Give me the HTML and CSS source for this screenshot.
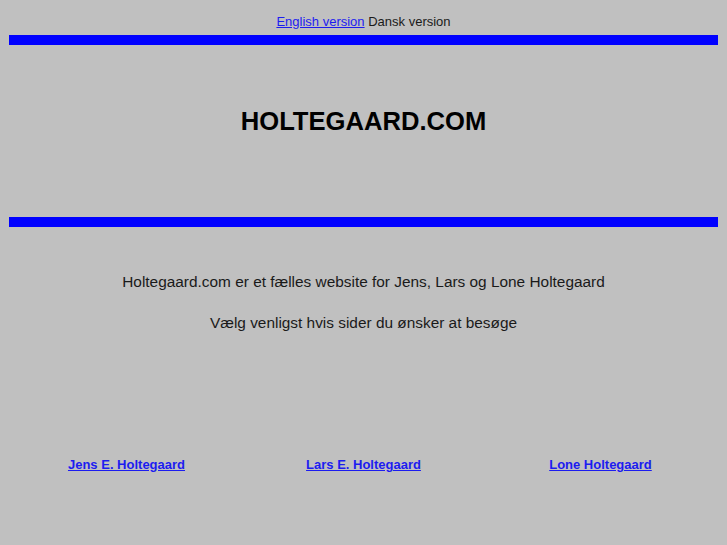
FILE: index.html
```html
<!DOCTYPE html>
<html lang="da">
<head>
  <meta charset="UTF-8" />
  <title>Holtegaard.com</title>
  <link rel="stylesheet" href="styles.css">
</head>
<body>

<div id="langBar">
  <a href="#">English version</a> Dansk version
</div>

<div class="blueBar"></div>

<div id="banner">
  <h1>HOLTEGAARD.COM</h1>
</div>

<div class="blueBar"></div>

<div id="intro">
  <p>Holtegaard.com er et fælles website for Jens, Lars og Lone Holtegaard</p>
  <p>Vælg venligst hvis sider du ønsker at besøge</p>
</div>

<div id="people">
  <a href="#">Jens E. Holtegaard</a>
  <a href="#">Lars E. Holtegaard</a>
  <a href="#">Lone Holtegaard</a>
</div>

</body>
</html>
```

FILE: styles.css
```css
body {
  margin: 8px;
  background: #c0c0c0;
  color: #1a1a1a;
  font-family: "Liberation Sans", Arial, sans-serif;
}

a {
  color: #1c1cf0;
}

#langBar {
  text-align: center;
  font-size: 13px;
  padding-top: 6px;
  height: 21px;
}

.blueBar {
  height: 10px;
  margin: 0 1px;
  background: #0000ff;
}

#banner {
  height: 172px;
  box-sizing: border-box;
  padding-top: 62px;
  text-align: center;
}

h1 {
  margin: 0;
  font-size: 25.6px;
  font-weight: bold;
  color: #000;
}

#intro {
  text-align: center;
  font-size: 15.4px;
  padding-top: 46px;
}

#intro p {
  margin: 0 0 23px 0;
}

#people {
  display: grid;
  grid-template-columns: 1fr 1fr 1fr;
  margin-top: 125px;
  text-align: center;
  font-size: 13px;
  font-weight: bold;
}
```
